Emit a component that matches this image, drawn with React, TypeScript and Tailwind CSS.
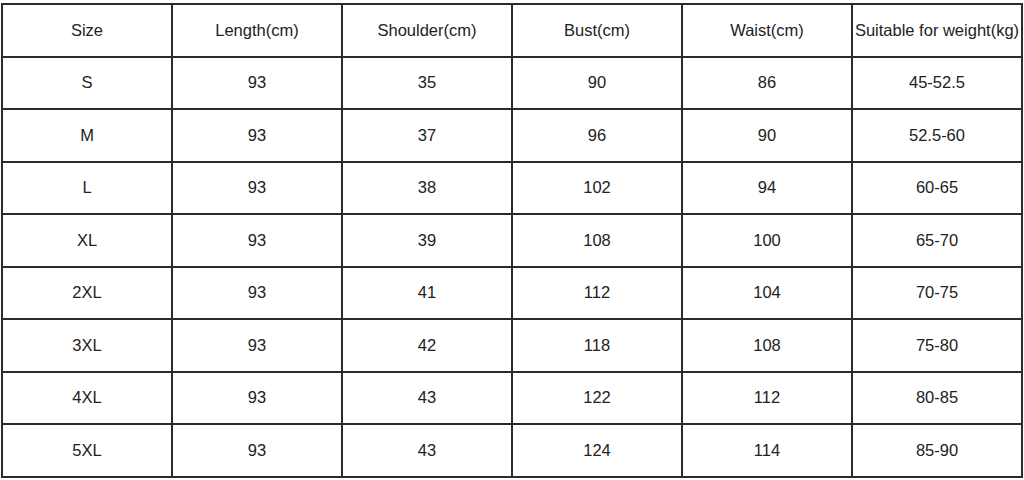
import React from 'react';

const headers = ['Size', 'Length(cm)', 'Shoulder(cm)', 'Bust(cm)', 'Waist(cm)', 'Suitable for weight(kg)'];

const rows = [
  ['S', '93', '35', '90', '86', '45-52.5'],
  ['M', '93', '37', '96', '90', '52.5-60'],
  ['L', '93', '38', '102', '94', '60-65'],
  ['XL', '93', '39', '108', '100', '65-70'],
  ['2XL', '93', '41', '112', '104', '70-75'],
  ['3XL', '93', '42', '118', '108', '75-80'],
  ['4XL', '93', '43', '122', '112', '80-85'],
  ['5XL', '93', '43', '124', '114', '85-90'],
];

const Cell = ({ children }: { children: React.ReactNode }) => (
  <div className="h-[52.5px] flex items-center justify-center border-r-2 border-b-2 border-[#2b2b2b] text-[16.5px] text-[#222] whitespace-nowrap">
    {children}
  </div>
);

const App = () => {
  return (
    <div className="w-[1024px] h-[480px] bg-white overflow-hidden" style={{ fontFamily: '"Liberation Sans", Arial, sans-serif' }}>
      <div className="ml-px mt-[3px] w-[1022px] grid grid-cols-6 border-l-2 border-t-2 border-[#2b2b2b]">
        {headers.map((h, i) => (
          <Cell key={'h' + i}>{h}</Cell>
        ))}
        {rows.map((row, r) =>
          row.map((v, c) => <Cell key={r + '-' + c}>{v}</Cell>)
        )}
      </div>
    </div>
  );
};

export default App;
